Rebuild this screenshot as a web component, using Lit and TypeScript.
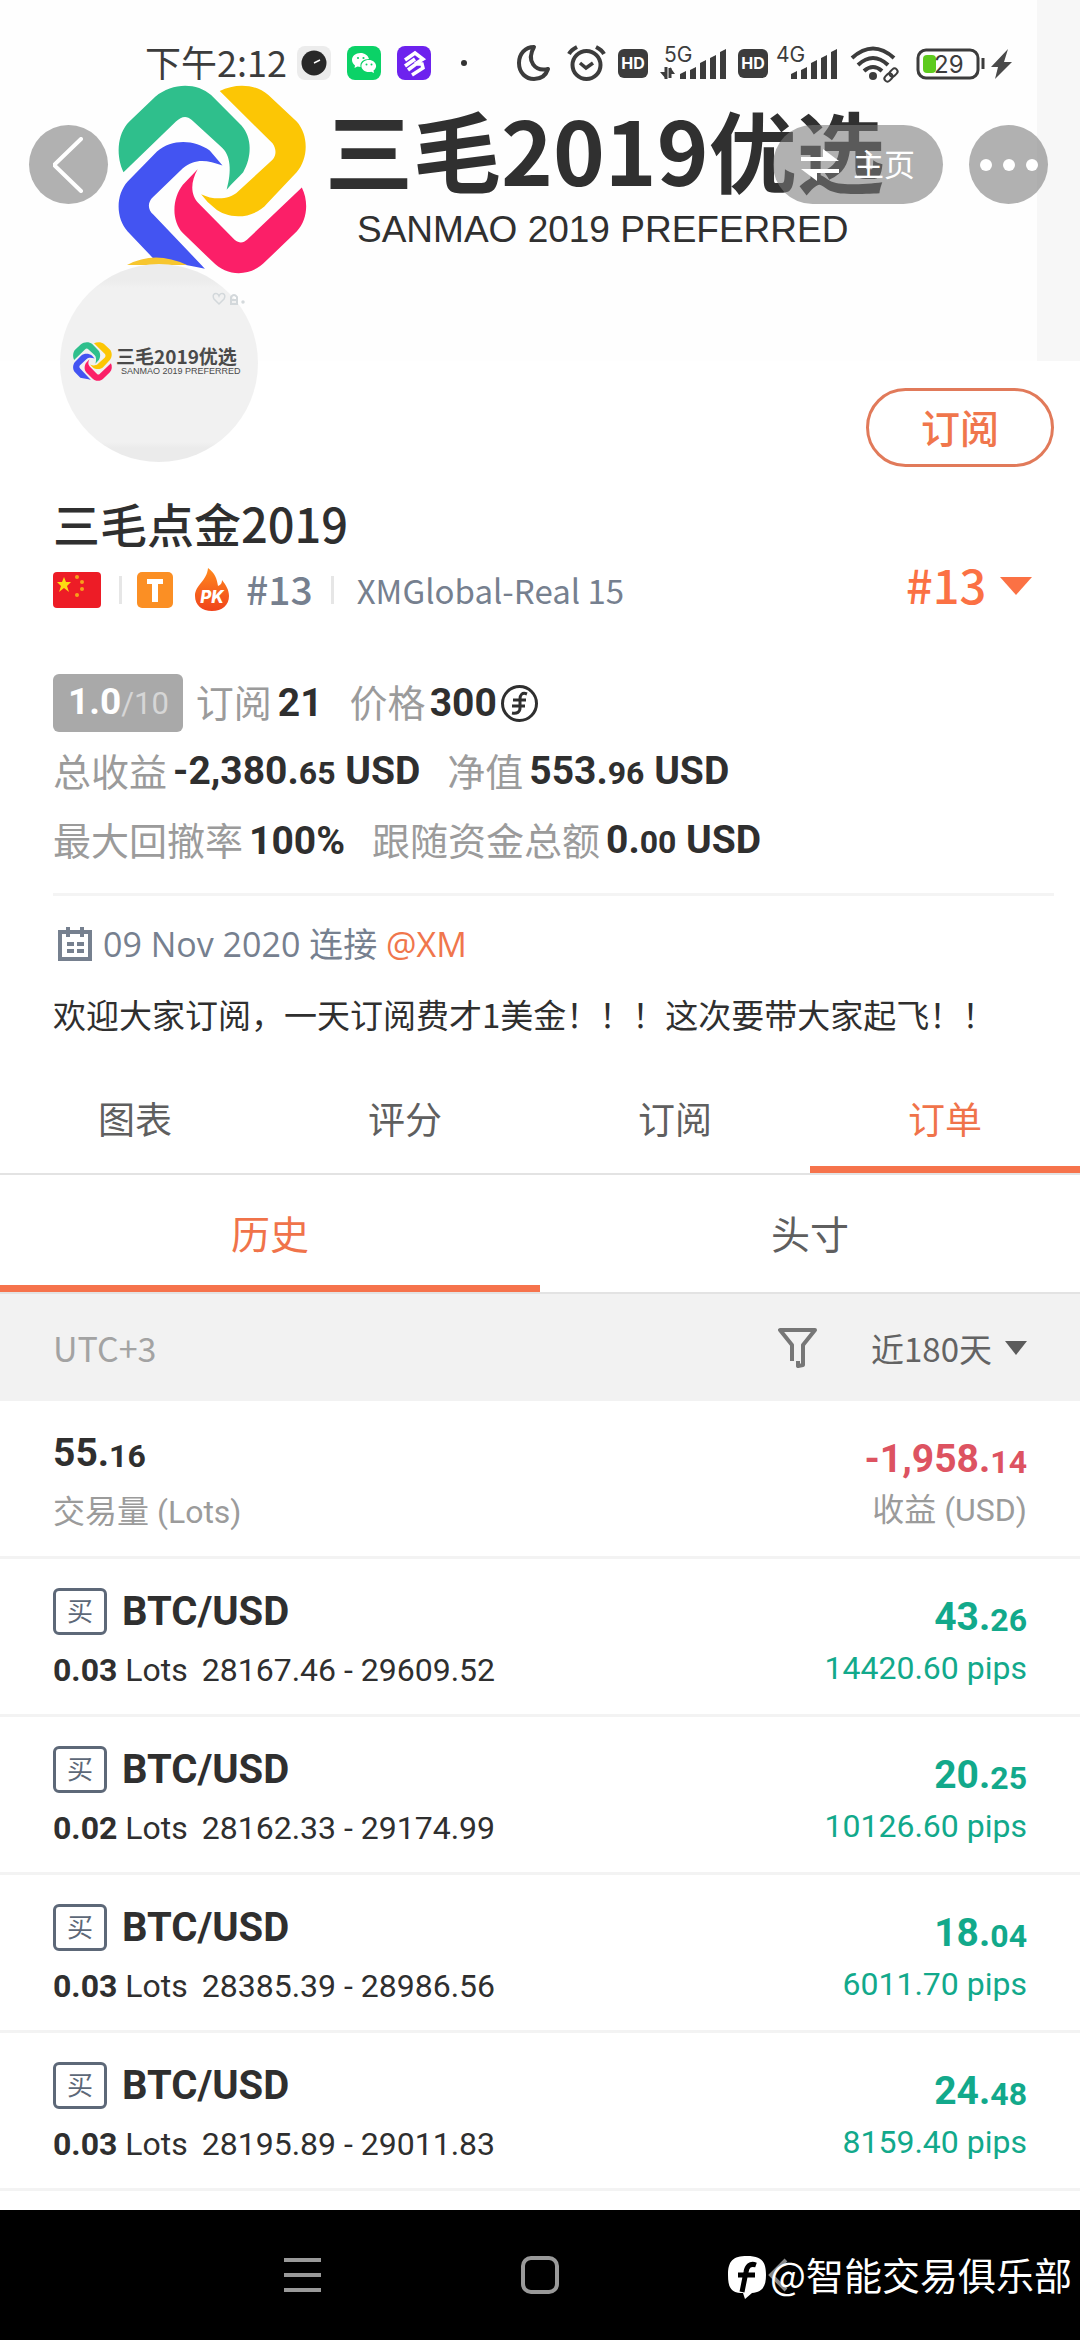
import { LitElement, html, css, svg, nothing } from 'lit';
import { customElement, property, state } from 'lit/decorators.js';
import { classMap } from 'lit/directives/class-map.js';

interface Order {
  symbol: string;
  lots: string;
  open: string;
  close: string;
  profit: string;
  pips: string;
}

const ORDERS: Order[] = [
  { symbol: 'BTC/USD', lots: '0.03', open: '28167.46', close: '29609.52', profit: '43.26', pips: '14420.60' },
  { symbol: 'BTC/USD', lots: '0.02', open: '28162.33', close: '29174.99', profit: '20.25', pips: '10126.60' },
  { symbol: 'BTC/USD', lots: '0.03', open: '28385.39', close: '28986.56', profit: '18.04', pips: '6011.70' },
  { symbol: 'BTC/USD', lots: '0.03', open: '28195.89', close: '29011.83', profit: '24.48', pips: '8159.40' },
];

const TABS = ['图表', '评分', '订阅', '订单'];
const SUB_TABS = ['历史', '头寸'];

// decimals are set smaller than the integer part
const money = (value: string, unit = '') => {
  const [whole, cents] = value.split('.');
  return html`${whole}.<small>${cents}</small>${unit ? ` ${unit}` : nothing}`;
};

@customElement('brand-logo')
class BrandLogo extends LitElement {
  static styles = css`
    :host {
      display: block;
    }
    svg {
      display: block;
      width: 100%;
      height: 100%;
      overflow: visible;
    }
  `;

  render() {
    return html`
      <svg viewBox="342 250 548 568" preserveAspectRatio="none" aria-hidden="true">
        <path fill="#2fbf8c" d="M358 512C338 470 336 400 375 360L450 285C500 242 570 242 612 280L700 372C732 410 730 468 705 512C692 528 672 545 657 565C672 510 670 460 640 435L556 355C540 340 525 345 510 360Z" />
        <path fill="#fcc605" d="M637 268C680 245 740 245 778 280L860 360C895 400 895 470 860 512L775 605C735 655 660 655 622 620Q600 602 583 578C620 597 665 595 690 570L790 475C803 460 800 440 790 425Z" />
        <path fill="#4354f2" d="M645 492C600 475 565 470 530 500L440 590C428 605 428 625 445 640L594 802C550 792 490 782 445 772L370 690C335 650 335 580 370 540L455 450C500 410 565 415 608 447Z" />
        <path fill="#fb1f68" d="M573 503C553 540 550 580 577 607L680 715C695 728 706 724 716 715L875 558C895 600 892 655 860 690L770 780C730 825 660 830 615 780L530 695C495 655 500 590 530 550Z" />
      </svg>
    `;
  }
}

@customElement('status-bar')
class StatusBar extends LitElement {
  static styles = css`
    :host {
      display: flex;
      justify-content: space-between;
      align-items: center;
      height: 44px;
      padding: 41px 68px 0 145px;
      color: #3c3c3c;
    }
    .group {
      display: flex;
      align-items: center;
      gap: 12px;
    }
    .apps {
      gap: 16px;
    }
    .clock {
      display: flex;
      align-items: center;
      gap: 10px;
    }
    .time {
      padding-bottom: 4px;
      font: 400 36px/44px 'Noto Sans CJK SC', sans-serif;
    }
    svg {
      display: block;
      overflow: visible;
    }
    .hd {
      font: 700 16px Inter, sans-serif;
      fill: #fff;
    }
    .net {
      font: 400 21px Inter, sans-serif;
      fill: #3c3c3c;
    }
    .battery {
      font: 400 24px Inter, sans-serif;
      fill: #3c3c3c;
    }
  `;

  #hd() {
    return html`
      <svg width="30" height="44" viewBox="0 0 30 44">
        <rect y="8" width="30" height="29" rx="6" fill="#3c3c3c" />
        <text class="hd" x="15" y="28" text-anchor="middle">HD</text>
      </svg>
    `;
  }

  #bars(x: number) {
    return svg`<path fill="#3c3c3c" d="M${x} 33l6-3v8h-6zM${x + 10} 29l6-3v12h-6zM${x + 20} 22l6-3v19h-6zM${x + 30} 17l6-3v24h-6zM${x + 40} 11l6-3v30h-6z" />`;
  }

  render() {
    return html`
      <div class="group apps">
        <div class="clock">
          <span class="time">下午2:12</span>
          <svg width="34" height="34" viewBox="0 0 34 34">
            <rect width="34" height="34" rx="8" fill="#ececec" />
            <circle cx="17" cy="17" r="12.500" fill="#282828" />
            <path d="M17 17l6-3" stroke="#fff" stroke-width="1.500" />
          </svg>
        </div>
        <svg width="34" height="34" viewBox="0 0 34 34">
          <rect width="34" height="34" rx="8" fill="#0bd267" />
          <path fill="#fff" d="M13.500 7C8.500 7 5 10.200 5 14c0 2.200 1.200 4 3 5.400L7.500 22l3-1.500c1 .3 2 .4 3 .4C12.700 16 16.500 13 22 13c-.8-3.600-4.300-6-8.500-6z" />
          <path fill="#fff" d="M21.800 14c-4.200 0-7.400 2.700-7.400 6s3.200 6 7.400 6c.9 0 1.700-.1 2.500-.3l2.700 1.300-.5-2.400c1.600-1.100 2.600-2.700 2.600-4.600 0-3.300-3.200-6-7.300-6z" />
          <g fill="#0bd267"><circle cx="11" cy="12" r="1.100" /><circle cx="16.500" cy="12" r="1.100" /><circle cx="19.500" cy="18.500" r="1" /><circle cx="24.500" cy="18.500" r="1" /></g>
        </svg>
        <svg width="34" height="34" viewBox="0 0 34 34">
          <rect width="34" height="34" rx="8" fill="#6d22ee" />
          <path d="M8 14L18 7l8 6-8 5M8 20l10-7M11 24l8-6h6l1 4-11 7" fill="none" stroke="#fff" stroke-width="3.500" />
        </svg>
        <svg width="34" height="34" viewBox="0 0 34 34"><circle cx="17" cy="17" r="3" fill="#333" /></svg>
      </div>
      <div class="group">
        <svg width="38" height="44" viewBox="0 0 38 44" fill="none" stroke="#3c3c3c" stroke-width="4">
          <path d="M17 6C8 6 2 13 2 22c0 10 7 16 15 16 7 0 12-4 14-10-13 3-22-8-14-22z" stroke-linejoin="round" />
        </svg>
        <svg width="39" height="44" viewBox="0 0 39 44" fill="none" stroke="#3c3c3c" stroke-width="4">
          <circle cx="19.500" cy="24" r="14" />
          <path d="M2 13Q4 9 10 6M37 13Q35 9 29 6" />
          <path d="M13 22l6 5 7-5" stroke-width="3.500" />
        </svg>
        ${this.#hd()}
        <svg width="66" height="44" viewBox="0 0 66 44">
          <text class="net" x="4" y="21">5G</text>
          <path d="M6 26v12M10 37V27" stroke="#3c3c3c" stroke-width="3" />
          <path d="M0 31h6v7zM10 26v7h5z" fill="#3c3c3c" />
          ${this.#bars(20)}
        </svg>
        ${this.#hd()}
        <svg width="58" height="44" viewBox="0 0 58 44">
          <text class="net" x="-4" y="21">4G</text>
          ${this.#bars(11)}
        </svg>
        <svg width="50" height="44" viewBox="0 0 50 44" fill="none" stroke="#3c3c3c" stroke-width="4">
          <path d="M2 17Q23 -2 44 17M8 24Q23 10 38 24M14 30Q23 22 32 30" />
          <circle cx="23" cy="35" r="4" fill="#3c3c3c" stroke="none" />
          <g stroke-width="2" transform="rotate(-45 41 34)">
            <rect x="33" y="31" width="9" height="6" rx="3" />
            <rect x="40" y="31" width="9" height="6" rx="3" />
          </g>
        </svg>
        <svg width="100" height="44" viewBox="0 0 100 44">
          <rect x="6" y="9" width="60" height="28" rx="8" fill="none" stroke="#3c3c3c" stroke-width="3" />
          <path d="M71 17v11" stroke="#3c3c3c" stroke-width="3" />
          <rect x="11" y="14" width="13" height="18" rx="4" fill="#5dcb1d" />
          <text class="battery" x="22" y="32">29</text>
          <path d="M96 8L79 26h7l-3 12 17-17h-8z" fill="#4a4a4a" />
        </svg>
      </div>
    `;
  }
}

@customElement('record-row')
class RecordRow extends LitElement {
  static styles = css`
    :host {
      display: flex;
      justify-content: space-between;
      padding: 28px 53px 21px;
      border-bottom: 3px solid #f3f3f3;
    }
    .side {
      display: flex;
      flex-direction: column;
      gap: 12px;
    }
    .end {
      align-items: flex-end;
      gap: 4px;
      padding-top: 6px;
    }
    ::slotted([slot='title']),
    ::slotted([slot='value']) {
      display: flex;
      align-items: center;
      height: 48px;
    }
    ::slotted([slot='detail']),
    ::slotted([slot='note']) {
      height: 46px;
      line-height: 46px;
    }
  `;

  render() {
    return html`
      <div class="side">
        <slot name="title"></slot>
        <slot name="detail"></slot>
      </div>
      <div class="side end">
        <slot name="value"></slot>
        <slot name="note"></slot>
      </div>
    `;
  }
}

@customElement('tab-strip')
class TabStrip extends LitElement {
  @property({ type: Array }) tabs: string[] = [];
  @property({ type: Number }) active = 0;
  @property({ type: Boolean, reflect: true }) large = false;

  static styles = css`
    :host {
      display: flex;
      border-bottom: 2px solid #e3e3e3;
    }
    button {
      flex: 1;
      padding: 6px 0 2px;
      border: 0;
      border-bottom: 7px solid transparent;
      background: none;
      color: #5f5f5f;
      font: 400 37px/92px 'Noto Sans CJK SC', sans-serif;
    }
    :host([large]) button {
      font-size: 39px;
      line-height: 102px;
    }
    button.active {
      border-bottom-color: #f6734c;
      color: #f0734a;
    }
  `;

  render() {
    return this.tabs.map(
      (tab, i) => html`
        <button
          role="tab"
          aria-selected=${i === this.active}
          class=${classMap({ active: i === this.active })}
          @click=${() => (this.active = i)}
        >${tab}</button>
      `
    );
  }
}

@customElement('app-root')
class AppRoot extends LitElement {
  @state() orders = ORDERS;

  static styles = css`
    :host {
      display: flex;
      flex-direction: column;
      min-height: 100vh;
      background: #fff;
      color: #2f2f2f;
      font-family: Roboto, 'Noto Sans CJK SC', sans-serif;
      --orange: #f0764c;
      --slate: #76808f;
      --grey: #9b9b9b;
    }
    button,
    select {
      margin: 0;
      padding: 0;
      border: 0;
      background: none;
      color: inherit;
      font: inherit;
      appearance: none;
    }
    a {
      color: inherit;
      text-decoration: none;
    }
    svg {
      display: block;
      flex: none;
    }
    small {
      font-size: 32px;
    }

    .cover {
      position: relative;
      height: 361px;
      background: linear-gradient(#f7f7f7, #f7f7f7) right / 43px 100% no-repeat #fefefe;
    }
    .brand {
      display: flex;
      gap: 18px;
      padding-left: 118px;
      color: #303030;
    }
    .brand-logo {
      width: 189px;
      height: 189px;
    }
    .brand-name {
      padding-top: 3px;
      font: 700 88px/120px 'Noto Sans CJK SC', sans-serif;
    }
    .brand-sub {
      padding-left: 32px;
      font: 400 37px/44px 'Liberation Sans', sans-serif;
    }
    .toolbar {
      position: absolute;
      top: 125px;
      left: 29px;
      right: 32px;
      display: flex;
      align-items: center;
      gap: 26px;
      color: #fff;
    }
    .round,
    .home {
      display: flex;
      align-items: center;
      justify-content: center;
      width: 79px;
      height: 79px;
      border-radius: 40px;
      background: rgba(120, 120, 120, 0.58);
    }
    .home {
      gap: 14px;
      width: 170px;
      margin-left: auto;
      font: 400 31px/44px 'Noto Sans CJK SC', sans-serif;
    }
    .home span {
      padding-bottom: 4px;
    }
    .avatar {
      position: absolute;
      top: 264px;
      left: 60px;
      box-sizing: border-box;
      display: flex;
      align-items: center;
      gap: 4px;
      width: 198px;
      height: 198px;
      padding: 0 0 4px 13px;
      border-radius: 50%;
      background: linear-gradient(#ececec 0 16px, #f1f1f1 24px 178px, #ebebeb 184px);
      color: #4a4a4a;
    }
    .avatar-logo {
      width: 39px;
      height: 39px;
    }
    .avatar-name {
      font: 700 19px/20px 'Noto Sans CJK SC', sans-serif;
      white-space: nowrap;
    }
    .avatar-sub {
      padding-left: 5px;
      font: 400 9px/10px 'Liberation Sans', sans-serif;
      white-space: nowrap;
    }
    .avatar-heart {
      position: absolute;
      top: 28px;
      left: 152px;
    }
    .sliver {
      position: absolute;
      top: 257px;
      left: 127px;
    }

    .profile {
      display: flex;
      flex-direction: column;
      padding: 27px 26px 0 53px;
    }
    .subscribe {
      align-self: flex-end;
      box-sizing: border-box;
      width: 188px;
      height: 79px;
      padding-bottom: 4px;
      border: 3px solid #e17a5a;
      border-radius: 40px;
      color: var(--orange);
      font: 500 39px/68px 'Noto Sans CJK SC', sans-serif;
    }
    .name {
      margin: 28px 0 0;
      font: 500 47px/56px 'Noto Sans CJK SC', sans-serif;
    }
    .meta {
      display: flex;
      align-items: center;
      height: 48px;
      margin-top: 15px;
      color: var(--slate);
    }
    .bar {
      width: 3px;
      height: 28px;
      margin: 0 15px 0 18px;
      background: #e6e6e6;
    }
    .pk {
      margin: 0 17px 0 22px;
    }
    .rank {
      padding-bottom: 3px;
      font: 500 39px/45px 'Noto Sans CJK SC', sans-serif;
    }
    .server {
      padding-left: 8px;
      font: 400 33px/48px 'Noto Sans CJK SC', sans-serif;
    }
    .picker {
      display: flex;
      align-items: center;
      gap: 13px;
      margin-left: auto;
    }
    .meta .picker {
      padding: 0 22px 8px 0;
      color: #fb7144;
      font: 500 47px/48px 'Noto Sans CJK SC', sans-serif;
    }
    .meta select {
      padding-bottom: 5px;
    }
    .stats {
      display: flex;
      flex-direction: column;
      gap: 13px;
      margin: 61px 0 0;
      padding-bottom: 24px;
      border-bottom: 3px solid #f4f4f4;
    }
    .stat-line {
      display: flex;
      align-items: center;
      gap: 27px;
      height: 56px;
    }
    .stat {
      display: flex;
      align-items: center;
      gap: 6px;
    }
    .stat dt {
      padding-bottom: 4px;
      color: var(--grey);
      font: 400 38px/52px 'Noto Sans CJK SC', sans-serif;
    }
    .stat dd {
      margin: 0;
      font: 700 39px/56px Roboto, sans-serif;
    }
    .stat-line .tight {
      gap: 4px;
    }
    .score {
      margin-right: -14px;
      padding: 0 14px 0 15px;
      border-radius: 6px;
      background: #a9a9a9;
      color: #fff;
      font: 700 37px/56px Roboto, sans-serif;
    }
    .score span {
      color: #d6d6d6;
      font-weight: 400;
      font-size: 31px;
    }
    .since {
      display: flex;
      align-items: center;
      gap: 11px;
      height: 48px;
      margin-top: 24px;
      padding-left: 5px;
      color: var(--slate);
      font: 400 34px/48px 'Open Sans', 'Noto Sans CJK SC', sans-serif;
    }
    .since a {
      color: var(--orange);
    }
    .intro {
      margin: 22px 0 28px;
      font: 400 33px/48px 'Noto Sans CJK SC', sans-serif;
    }

    .filter {
      display: flex;
      align-items: center;
      height: 107px;
      padding: 0 53px;
      background: #f2f2f2;
      color: #636363;
      font: 400 33px/48px 'Noto Sans CJK SC', sans-serif;
    }
    .zone {
      margin-right: auto;
      color: #a3a3a3;
      font-size: 34px;
    }
    .filter .picker {
      margin-left: 54px;
    }

    .orders {
      margin: 0;
      padding: 0;
      list-style: none;
    }
    .amount {
      font-weight: 700;
      font-size: 39px;
    }
    .caption {
      color: var(--grey);
      font-size: 32px;
    }
    .loss {
      color: #dd5361;
    }
    .gain {
      color: #12a98b;
    }
    .amount small {
      padding-top: 6px;
    }
    .symbol {
      gap: 15px;
      font-weight: 700;
      font-size: 40px;
    }
    .side-tag {
      box-sizing: border-box;
      width: 54px;
      height: 47px;
      border: 3px solid #5d6878;
      border-radius: 6px;
      color: #5d6878;
      font: 400 26px/38px 'Noto Sans CJK SC', sans-serif;
      text-align: center;
    }
    .detail {
      font-size: 32px;
    }
    .detail span {
      padding-left: 6px;
    }

    .nav {
      position: relative;
      display: flex;
      align-items: center;
      height: 130px;
      margin-top: auto;
      padding: 0 17%;
      background: #000;
    }
    .nav button {
      display: flex;
      flex: 1;
      justify-content: center;
    }
    .watermark {
      position: absolute;
      top: 36px;
      right: 8px;
      display: flex;
      align-items: center;
      gap: 4px;
      color: #fff;
      font: 400 38px/56px 'Noto Sans CJK SC', sans-serif;
    }
    .watermark svg {
      margin-top: 8px;
    }
  `;

  #cover() {
    return html`
      <header class="cover">
        <status-bar></status-bar>
        <div class="brand">
          <brand-logo class="brand-logo"></brand-logo>
          <div>
            <div class="brand-name">三毛2019优选</div>
            <div class="brand-sub">SANMAO 2019 PREFERRED</div>
          </div>
        </div>
        <svg class="sliver" width="60" height="10" viewBox="0 0 60 10" aria-hidden="true">
          <path d="M0 8Q28 -7 60 8Z" fill="#f7c62f" />
        </svg>
        <div class="avatar">
          <brand-logo class="avatar-logo"></brand-logo>
          <div>
            <div class="avatar-name">三毛2019优选</div>
            <div class="avatar-sub">SANMAO 2019 PREFERRED</div>
          </div>
          <svg class="avatar-heart" width="34" height="14" viewBox="0 0 34 14" fill="none" stroke="#d3d8db" stroke-width="1.500" aria-hidden="true">
            <path d="M7 12L2 7C-1 2 5-1 7 4c2-5 8-2 5 3z" />
            <path d="M19 5q3-4 6 0v7h-6zM20 8h4" stroke-width="2" />
            <circle cx="31" cy="10" r="1" />
          </svg>
        </div>
        <div class="toolbar">
          <button class="round" aria-label="返回">
            <svg width="32" height="56" viewBox="0 0 32 56" fill="none" stroke="#fff" stroke-width="4" stroke-linecap="round" stroke-linejoin="round">
              <path d="M28 2L1 28l27 26" />
            </svg>
          </button>
          <button class="home">
            <svg width="38" height="32" viewBox="0 0 38 32" fill="#fff">
              <path d="M0 8h22V0l16 12H0zM38 20H0l16 12v-8h22z" />
            </svg>
            <span>主页</span>
          </button>
          <button class="round" aria-label="更多">
            <svg width="58" height="12" viewBox="0 0 58 12" fill="#fff">
              <circle cx="6" cy="6" r="6" />
              <circle cx="29" cy="6" r="6" />
              <circle cx="52" cy="6" r="6" />
            </svg>
          </button>
        </div>
      </header>
    `;
  }

  #meta() {
    return html`
      <div class="meta">
        <svg width="48" height="36" viewBox="0 0 48 36" role="img" aria-label="中国">
          <rect width="48" height="36" rx="4" fill="#ed1c26" />
          <path fill="#fddc12" d="M11 5l2 5h5l-4 4 2 6-5-4-5 4 2-6-4-4h5z" />
          <g fill="#f7a01b"><circle cx="24" cy="5" r="2" /><circle cx="29" cy="10" r="2" /><circle cx="29" cy="17" r="2" /><circle cx="24" cy="23" r="2" /></g>
        </svg>
        <span class="bar"></span>
        <svg width="36" height="36" viewBox="0 0 36 36" aria-hidden="true">
          <rect width="36" height="36" rx="5" fill="#fb8f24" />
          <path d="M10 7h16v5h-5v18h-6V12h-5z" fill="#fff" />
        </svg>
        <svg class="pk" width="34" height="44" viewBox="0 0 34 44">
          <defs>
            <linearGradient id="flame" x1="0" y1="0" x2="0" y2="1">
              <stop offset="0" stop-color="#ff8a1e" />
              <stop offset="1" stop-color="#f0431b" />
            </linearGradient>
          </defs>
          <path fill="url(#flame)" d="M13 0c7 5 9 11 10 18 3-1 4-3 4-6 4 5 7 10 7 16 0 9-7 15-17 15S0 37 0 28C0 17 12 13 13 0z" />
          <text x="17" y="35" text-anchor="middle" fill="#fff" font-family="Inter" font-size="17" font-weight="800" font-style="italic">PK</text>
        </svg>
        <span class="rank">#13</span>
        <span class="bar"></span>
        <span class="server">XMGlobal-Real 15</span>
        <label class="picker">
          <select aria-label="账号">
            <option>#13</option>
          </select>
          <svg width="32" height="18" viewBox="0 0 32 18" aria-hidden="true"><path d="M0 0h32L16 18z" fill="#fb7144" /></svg>
        </label>
      </div>
    `;
  }

  #stats() {
    return html`
      <dl class="stats">
        <div class="stat-line">
          <div class="score">1.0<span>/10</span></div>
          <div class="stat"><dt>订阅</dt><dd>21</dd></div>
          <div class="stat tight">
            <dt>价格</dt>
            <dd>300</dd>
            <svg width="37" height="37" viewBox="0 0 37 37" fill="none" stroke="#2f2f2f" aria-hidden="true">
              <circle cx="18.500" cy="18.500" r="17" stroke-width="3" />
              <path d="M26 9c-5-2-7 1-7 5v9c0 4-3 6-8 5M12 15h13M11 21h13" stroke-width="3" />
            </svg>
          </div>
        </div>
        <div class="stat-line">
          <div class="stat"><dt>总收益</dt><dd>${money('-2,380.65', 'USD')}</dd></div>
          <div class="stat"><dt>净值</dt><dd>${money('553.96', 'USD')}</dd></div>
        </div>
        <div class="stat-line">
          <div class="stat"><dt>最大回撤率</dt><dd>100%</dd></div>
          <div class="stat"><dt>跟随资金总额</dt><dd>${money('0.00', 'USD')}</dd></div>
        </div>
      </dl>
    `;
  }

  #order(order: Order) {
    return html`
      <li>
        <record-row>
          <div slot="title" class="symbol"><span class="side-tag">买</span>${order.symbol}</div>
          <div slot="detail" class="detail"><b>${order.lots}</b> Lots <span>${order.open} - ${order.close}</span></div>
          <div slot="value" class="amount gain">${money(order.profit)}</div>
          <div slot="note" class="detail gain">${order.pips} pips</div>
        </record-row>
      </li>
    `;
  }

  render() {
    return html`
      ${this.#cover()}
      <section class="profile">
        <button class="subscribe">订阅</button>
        <h1 class="name">三毛点金2019</h1>
        ${this.#meta()} ${this.#stats()}
        <div class="since">
          <svg width="34" height="34" viewBox="0 0 34 34" fill="none" stroke="#76808f" stroke-width="4" aria-hidden="true">
            <path d="M2 5h30v27H2zM10 0v10M24 0v10M9 17h7M19 17h7M9 24h7M19 24h7" />
          </svg>
          <span>09 Nov 2020 连接 <a href="#xm">@XM</a></span>
        </div>
        <p class="intro">欢迎大家订阅，一天订阅费才1美金！！！这次要带大家起飞！！</p>
      </section>
      <tab-strip role="tablist" .tabs=${TABS} .active=${3}></tab-strip>
      <tab-strip role="tablist" large .tabs=${SUB_TABS} .active=${0}></tab-strip>
      <div class="filter">
        <span class="zone">UTC+3</span>
        <button aria-label="筛选">
          <svg width="39" height="40" viewBox="0 0 39 40" fill="none" stroke="#777" stroke-width="4">
            <path d="M14 33V17L2 2h35L25 17v20l-5 1v-5" stroke-linejoin="round" />
          </svg>
        </button>
        <label class="picker">
          <select aria-label="时间范围">
            <option>近180天</option>
          </select>
          <svg width="22" height="14" viewBox="0 0 22 14" aria-hidden="true"><path d="M0 0h22L11 14z" fill="#5c5c5c" /></svg>
        </label>
      </div>
      <record-row>
        <div slot="title" class="amount">${money('55.16')}</div>
        <div slot="detail" class="caption">交易量 (Lots)</div>
        <div slot="value" class="amount loss">${money('-1,958.14')}</div>
        <div slot="note" class="caption">收益 (USD)</div>
      </record-row>
      <ul class="orders">
        ${this.orders.map((order) => this.#order(order))}
      </ul>
      <nav class="nav">
        <button aria-label="菜单">
          <svg width="37" height="36" viewBox="0 0 37 36" stroke="#999" stroke-width="4"><path d="M0 3h37M0 18h37M0 33h37" /></svg>
        </button>
        <button aria-label="桌面">
          <svg width="38" height="38" viewBox="0 0 38 38" fill="none" stroke="#999" stroke-width="4"><rect x="2" y="2" width="34" height="34" rx="8" /></svg>
        </button>
        <button aria-label="后退">
          <svg width="20" height="34" viewBox="0 0 20 34" fill="none" stroke="#888" stroke-width="4"><path d="M18 2L3 17l15 15" /></svg>
        </button>
        <div class="watermark">
          <svg width="38" height="44" viewBox="0 0 38 44" aria-hidden="true">
            <path fill="#fff" d="M19 0C5 0 0 5 0 19s4 18 15 18l2 6 7-6c10-1 14-6 14-18C38 5 33 0 19 0z" />
            <path d="M28 9c-6-2-9 1-10 7l-4 20M10 19h17" fill="none" stroke="#000" stroke-width="5" />
          </svg>
          @智能交易俱乐部
        </div>
      </nav>
    `;
  }
}
